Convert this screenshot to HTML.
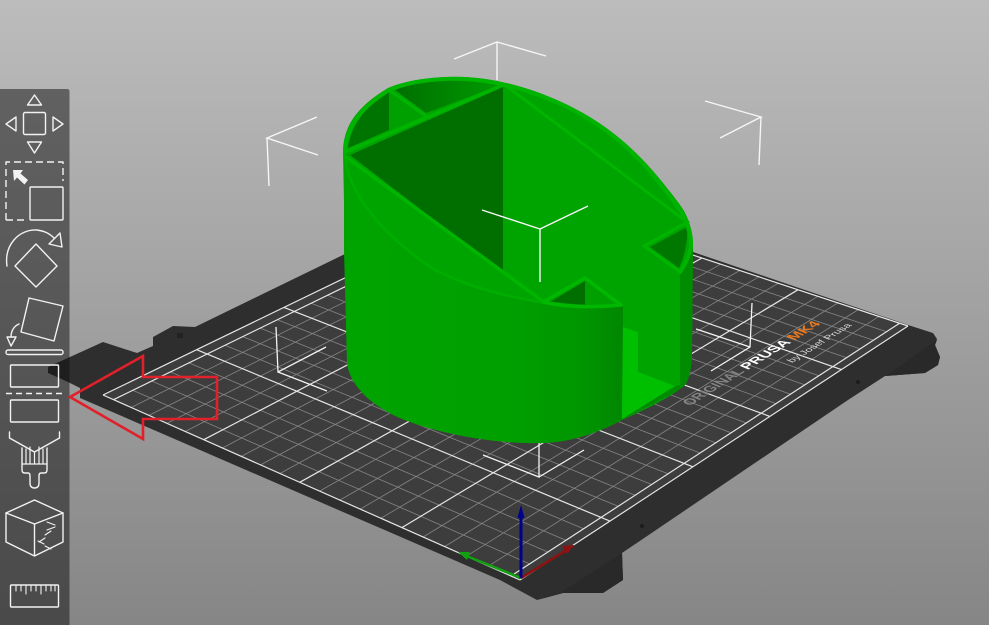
<!DOCTYPE html>
<html>
<head>
<meta charset="utf-8">
<style>
html,body{margin:0;padding:0;width:989px;height:625px;overflow:hidden;background:#a0a0a0}
svg{display:block;position:absolute;left:0;top:0}
text{font-family:"Liberation Sans",sans-serif}
</style>
</head>
<body>
<svg id="s" width="989" height="625" viewBox="0 0 989 625" xmlns="http://www.w3.org/2000/svg">
<defs>
<linearGradient id="bg" x1="0" y1="0" x2="0" y2="1"><stop offset="0" stop-color="#bcbcbc"/><stop offset="1" stop-color="#868686"/></linearGradient>
<linearGradient id="wall" gradientUnits="userSpaceOnUse" x1="345" y1="0" x2="622" y2="0"><stop offset="0" stop-color="#00a400"/><stop offset=".6" stop-color="#009f00"/><stop offset=".85" stop-color="#009600"/><stop offset="1" stop-color="#008700"/></linearGradient>
<linearGradient id="back" gradientUnits="userSpaceOnUse" x1="395" y1="0" x2="503" y2="0"><stop offset="0" stop-color="#006f00"/><stop offset="1" stop-color="#009c00"/></linearGradient>
</defs>
<rect width="989" height="625" fill="url(#bg)"/>

<!-- plate body -->
<polygon fill="#2e2e2e" points="48,367 103,342 137,353 153,346 153,337 173,326 195,327 347,253 514,170 693,252 908,325 933,333 937,339 935,345 940,357 938,365 925,373 885,376 848,400 622,553 623,580 603,593 563,593 537,600 500,580 200,450 80,398 80,388 68,382 48,373"/>
<polygon fill="#292929" points="622,553 623,580 603,593 563,593 537,600 560,593"/>
<polygon fill="#292929" points="885,376 925,373 938,365 940,357 935,345 937,340"/>
<circle cx="642" cy="526" r="2" fill="#1c1c1c"/><circle cx="858" cy="382" r="2" fill="#1c1c1c"/><rect x="177" y="333" width="6" height="5" fill="#222"/>

<!-- printable surface -->
<polygon fill="#3d3d3d" points="520,580 908,326 514,196 103,395"/>
<g id="grid" fill="none"></g>

<!-- bed text -->
<g transform="matrix(.848,-.53,.92,.39,690,406)" font-size="14">
<text x="0" y="0" fill="#858585" font-weight="bold" textLength="65" lengthAdjust="spacingAndGlyphs">ORIGINAL</text>
<text x="68" y="0" fill="#fff" font-weight="bold" textLength="52" lengthAdjust="spacingAndGlyphs">PRUSA</text>
<text x="123" y="0" fill="#e8781e" font-weight="bold" textLength="32" lengthAdjust="spacingAndGlyphs">MK4</text>
</g>
<g transform="matrix(.848,-.53,.92,.39,792,363)" font-size="9.500">
<text x="0" y="0" fill="#d8d8d8" textLength="71" lengthAdjust="spacingAndGlyphs">by Josef Prusa</text>
</g>

<!-- lower gizmo lines -->
<g stroke="#f4f4f4" stroke-width="1.3" fill="none">
<path d="M276 327L278 372L326 347M278 372L327 391"/>
<path d="M752 303L750 347L711 371M750 347L696 329"/>
<path d="M539 430V477L483 455M539 477L584 450"/>
</g>

<!-- axes -->
<g>
<path d="M521 578L573 546" stroke="#8f1212" stroke-width="2.5"/><polygon points="574,545 562,546 567,554" fill="#8f1212"/>
<path d="M521 578L464 555" stroke="#11a011" stroke-width="2.5"/><polygon points="458,552 470,552 467,560" fill="#11a011"/>
<path d="M521 578V515" stroke="#00008c" stroke-width="3"/><polygon points="521,505 517.5,518 524.5,518" fill="#00008c"/>
</g>

<!-- object -->
<path fill="#00a400" d="M343 150C344 125 358 106 388 88C408 79 440 76 465 77C485 78 505 82 525 88C560 99 590 115 613 133C635 150 650 167 663 183C675 198 684 209 687 217C691 227 693 235 693 245L692 350C692 365 690 378 685 385C670 398 640 412 622 420C600 432 570 443 539 443C500 444 440 435 400 418C370 405 350 385 347 363Z"/>
<!-- front wall -->
<path fill="url(#wall)" d="M344 155C346 185 370 225 430 267C470 290 540 306 623 306L622 420C600 432 570 443 539 443C500 444 440 435 400 418C370 405 350 385 347 363L344 250Z"/>
<!-- right side wall -->
<path fill="#008c00" d="M680 272C686 262 691 252 693 243L692 350C692 365 690 378 685 385L676 392L622 420L622 419L675 386L680 385Z"/>
<!-- slot -->
<polygon fill="#00be00" points="623,327 638,332 638,372 675,386 622,419"/>
<!-- main dark -->
<polygon fill="#006f00" points="350,155 503,87 503,273"/>
<!-- back-left compartments -->
<path fill="#007400" d="M348 148C350 128 365 105 389 92V130Z"/>
<polygon fill="#00a000" points="389,92 425,115 389,130"/>
<path fill="url(#back)" d="M395 90C425 78 470 78 501 85L426 113Z"/>
<!-- right small -->
<path fill="#007800" d="M650 247L687 227C688 240 685 255 679 268Z"/>
<!-- front small -->
<polygon fill="#006f00" points="550,302 585,281 585,305"/>
<polygon fill="#00a000" points="585,281 615,304 585,305"/>
<!-- rims -->
<g fill="none" stroke-linecap="round" stroke-linejoin="round">
<path stroke="#00b500" stroke-width="4" d="M345 152C346 127 360 108 389 90C409 81 440 78 465 79C485 80 505 84 524 90C559 101 589 117 612 135C634 152 649 169 661 185C673 200 682 211 685 219C689 229 691 236 691 246C689 256 685 265 680 272"/>
<path stroke="#00ae00" stroke-width="2.5" d="M345 155C347 185 370 225 430 267C470 290 530 302 560 304"/>
<path stroke="#00b500" stroke-width="3.5" d="M346 157L544 302"/>
<path stroke="#00b500" stroke-width="3.5" d="M348 151L503 85"/>
<path stroke="#00b500" stroke-width="3" d="M389 90L426 116"/>
<path stroke="#00b400" stroke-width="3" d="M505 85L687 222"/>
<path stroke="#00b500" stroke-width="3" d="M688 222L644 246L679 271"/>
<path stroke="#00b800" stroke-width="3.5" d="M543 302L585 278L621 305C590 308 565 307 543 302"/>
</g>

<!-- upper gizmo lines -->
<g stroke="#f6f6f6" stroke-width="1.4" fill="none">
<path d="M454 59L497 42L546 56M497 42V80"/>
<path d="M317 117L267 138L318 155M267 138L269 186"/>
<path d="M705 101L761 117L720 138M761 117L759 165"/>
<path d="M482 210L540 229L588 206M540 229V282"/>
</g>

<!-- toolbar -->
<path d="M0 89H67Q69.500 89 69.500 91.500V625H0Z" fill="rgb(14,14,14)" fill-opacity=".5"/>

<!-- toolbar icons -->
<g fill="none" stroke="#f2f2f2" stroke-width="1.4" stroke-linejoin="round" stroke-linecap="round">
<path d="M34.500 95L27.500 105H41.500Z"/><rect x="23.500" y="112.500" width="22" height="22" rx="1.500"/>
<path d="M16 117V131L6 124Z"/><path d="M53 117V131L63 124Z"/><path d="M27.500 142H41.500L34.500 153Z"/>

<path stroke-dasharray="7 4" stroke-linecap="butt" d="M6 220V162H63V181"/><path stroke-dasharray="7 4" stroke-linecap="butt" d="M6 220H25"/>
<rect x="30" y="187" width="33" height="33" rx="1"/>
<path fill="#f2f2f2" stroke="none" d="M13 170H23L20.500 173.500L28 180L24.500 184.500L17 177.500L14 181Z"/>

<path d="M7 266C4 245 19 229 37 230C44 231 49 233 54 238"/>
<path d="M49 244L60 233L62 247Z"/>
<path d="M36 244L57 266L36 287L15 266Z"/>

<path d="M29 298L63 306L54 341L21 332Z"/>
<path d="M19 324C14 326 11 331 11 337"/><path d="M7 337H16L11 346Z"/>
<rect x="6" y="350" width="57" height="4.500" rx="2"/>

<rect x="10.500" y="365" width="48" height="22" rx="1"/>
<path stroke-dasharray="6 4" stroke-linecap="butt" d="M6 393.500H63"/>
<rect x="10.500" y="400" width="48" height="22" rx="1"/>

<path d="M9.500 432V438L34.500 452L59.500 438V432"/>
<path d="M22 448V470Q22 473 25 473H28Q30 473 30 476V483Q30 488 34.500 488Q39 488 39 483V476Q39 473 41 473H44Q47 473 47 470V448"/>
<path d="M22 464H47M26 449V464M30 447V464M34.500 452V464M39 447V464M43 449V464" stroke-width="1.200"/>

<path d="M34.500 500L63 513L34.500 524L6 513Z"/>
<path d="M6 513V542L34.500 556L63 542V513M34.500 524V556"/>
<path d="M47 522L55 525M47 530L55 527M45 535L51 531M39 542L45 538M38 541L44 544M45 546L51 549" stroke-width="1.100"/>

<rect x="10.500" y="585" width="48" height="22" rx="1"/>
<path d="M16 585V591M21 585V591M26 585V594M31 585V591M36 585V591M41 585V594M46 585V591M51 585V591M55 585V591" stroke-width="1.100"/>
</g>

<!-- red arrow -->
<polygon points="70,397 143,356 143,377 217,377 217,419 143,419 143,439" fill="none" stroke="#e0202a" stroke-width="2.600" stroke-linejoin="miter"/>
</svg>
<script>
(function(){
var a=575.2,b=-402.4,c=520,d=-186.8,e=-129,f=580,g=.2062,h=.1417;
function P(x,y){var s=x/250,t=y/210,w=1+g*s+h*t;return ((a*s+b*t+c)/w).toFixed(1)+" "+((d*s+e*t+f)/w).toFixed(1);}
var mn="",mj="",i;
for(i=0;i<=250;i+=10){ if(i%50==0)continue; mn+="M"+P(i,4)+"L"+P(i,204); }
for(i=0;i<=20;i++){ if(i%5==0)continue; var y=4+i*10; mn+="M"+P(0,y)+"L"+P(250,y); }
for(i=0;i<=250;i+=50){ mj+="M"+P(i,0)+"L"+P(i,210); }
for(i=0;i<=4;i++){ var y2=4+i*50; mj+="M"+P(0,y2)+"L"+P(250,y2); }
mj+="M"+P(0,0)+"L"+P(250,0)+"M"+P(0,210)+"L"+P(250,210);
var G=document.getElementById("grid");
function add(dd,col,w){var p=document.createElementNS("http://www.w3.org/2000/svg","path");p.setAttribute("d",dd);p.setAttribute("stroke",col);p.setAttribute("stroke-width",w);G.appendChild(p);}
add(mn,"#858585",".8");
add(mj,"#e6e6e6","1.2");
})();
</script>
</body>
</html>
